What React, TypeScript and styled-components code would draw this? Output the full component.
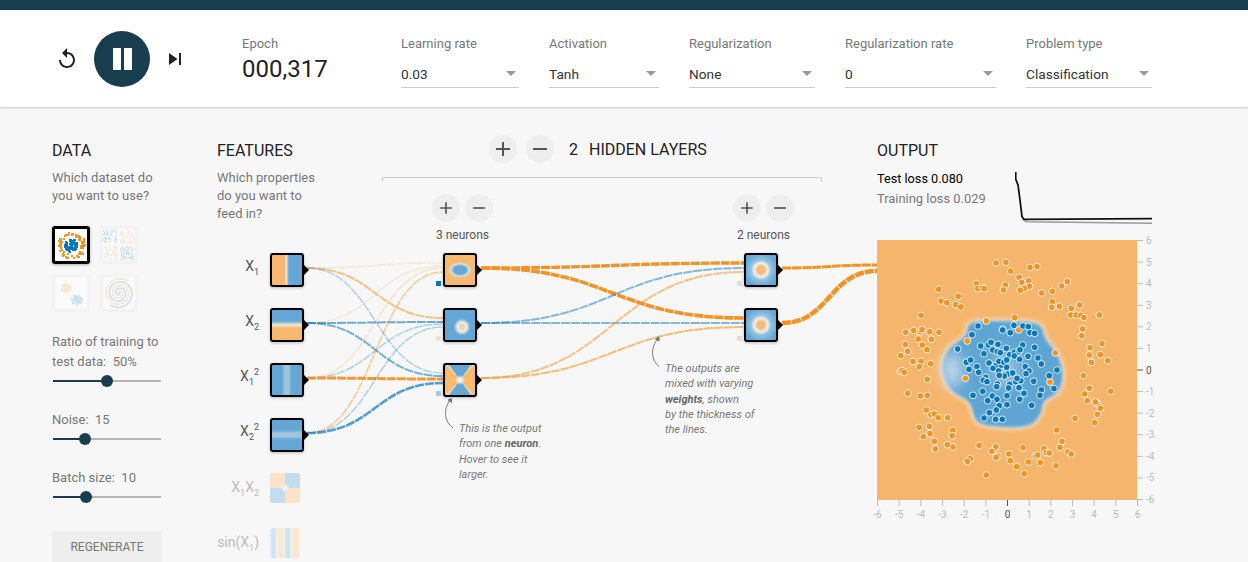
import React from 'react';
import styled, { createGlobalStyle } from 'styled-components';

const DARK = '#183d4e';
const ORANGE = '#f59322';
const BLUE = '#0877bd';

const GlobalStyle = createGlobalStyle`
  html, body {
    margin: 0;
    height: 562px;
    overflow: hidden;
    background: #f7f7f7;
    font-family: Roboto, "Liberation Sans", sans-serif;
  }
`;

const TopBar = styled.div`
  height: 10px;
  background: ${DARK};
  box-shadow: 0 1px 3px rgba(0, 0, 0, 0.35);
`;

const Header = styled.header`
  height: 97px;
  background: #fff;
  display: flex;
  align-items: flex-start;
  padding-left: 55px;
  box-shadow: 0 1px 2px rgba(0, 0, 0, 0.2);
`;

const Controls = styled.div`
  display: flex;
  align-items: center;
  height: 56px;
  margin-top: 21px;
`;

const IconButton = styled.div`
  width: 24px;
  height: 24px;
  color: #222;
`;

const PlayButton = styled.div`
  width: 56px;
  height: 56px;
  margin: 0 13px 0 15px;
  border-radius: 50%;
  background: ${DARK};
  display: flex;
  align-items: center;
  justify-content: center;
  gap: 3px;
`;

const PauseBar = styled.span`
  width: 8px;
  height: 22px;
  background: #fff;
`;

const Epoch = styled.div`
  width: 159px;
  margin: 26px 0 0 55px;
`;

const FieldLabel = styled.div`
  font-size: 13px;
  line-height: 15px;
  color: #777;
`;

const EpochValue = styled.div`
  font-size: 24px;
  line-height: 28px;
  margin-top: 4px;
  color: #222;
`;

const Fields = styled.div`
  display: flex;
  gap: 30px;
  margin-top: 26px;
`;

const Field = styled.div<{ $width: number }>`
  width: ${(p) => p.$width}px;
`;

const SelectBox = styled.div`
  position: relative;
  height: 27px;
  margin-top: 9px;
  font-size: 13.7px;
  line-height: 28px;
  color: #333;
  border-bottom: 1px solid #ccc;

  &::after {
    content: '';
    position: absolute;
    right: 3px;
    top: 11px;
    border-left: 5px solid transparent;
    border-right: 5px solid transparent;
    border-top: 5px solid #999;
  }
`;

const Main = styled.main`
  display: grid;
  grid-template-columns: 165px 660px 1fr;
  padding-left: 52px;
  height: 455px;
`;

const Heading = styled.h4`
  margin: 0;
  font-size: 16px;
  line-height: 20px;
  font-weight: 400;
  color: #222;
`;

const Hint = styled.p`
  margin: 8px 0 0;
  font-size: 13px;
  line-height: 18px;
  color: #777;
`;

const DataColumn = styled.section`
  padding-top: 34px;
`;

const DatasetGrid = styled.div`
  display: grid;
  grid-template-columns: 38px 38px;
  gap: 10px;
  margin-top: 21px;
`;

const Dataset = styled.div<{ $selected?: boolean }>`
  width: 38px;
  height: 38px;
  box-sizing: border-box;
  border-radius: 3px;
  background: ${(p) => (p.$selected ? '#fff' : '#fafafa')};
  border: ${(p) => (p.$selected ? '3px solid #000' : '3px solid #f2f2f2')};
  box-shadow: ${(p) => (p.$selected ? '0 1px 3px rgba(0,0,0,.3)' : 'none')};

  svg {
    display: block;
    opacity: ${(p) => (p.$selected ? 1 : 0.2)};
  }
`;

const SliderBlock = styled.div<{ $top: number }>`
  width: 110px;
  margin-top: ${(p) => p.$top}px;
  font-size: 13px;
  line-height: 20px;
  color: #777;
`;

const SliderTrack = styled.div`
  position: relative;
  height: 2px;
  margin: 8px 0 0 1px;
  width: 108px;
  background: #b5b5b5;
`;

const SliderFill = styled.div`
  height: 2px;
  background: ${DARK};
`;

const SliderThumb = styled.div`
  position: absolute;
  top: -5px;
  width: 12px;
  height: 12px;
  margin-left: -6px;
  border-radius: 50%;
  background: ${DARK};
`;

const Regenerate = styled.div`
  width: 110px;
  height: 36px;
  margin-top: 33px;
  border-radius: 2px;
  background: #eee;
  color: #777;
  font-size: 12px;
  line-height: 33px;
  text-align: center;
`;

const Diagram = styled.section`
  position: relative;
  display: flex;
  padding-top: 34px;
`;

const LinkLayer = styled.svg`
  position: absolute;
  left: 0;
  top: 0;
  pointer-events: none;
`;

const FeatureIntro = styled.div`
  width: 165px;
  position: relative;
`;

const FeatureHint = styled(Hint)`
  width: 110px;
`;

const HiddenColumn = styled.div`
  width: 440px;
  position: relative;
`;

const LayersBar = styled.div`
  display: flex;
  align-items: center;
  height: 28px;
  margin-top: -6px;
  padding-left: 107px;
  font-size: 16px;
  color: #222;
`;

const RoundButton = styled.div<{ $gap?: number }>`
  width: 28px;
  height: 28px;
  margin-right: ${(p) => p.$gap ?? 0}px;
  border-radius: 50%;
  background: #eee;
  color: #555;
  display: flex;
  align-items: center;
  justify-content: center;
`;

const LayerCount = styled.span`
  margin: 0 11px 0 15px;
`;

const Bracket = styled.div`
  height: 4px;
  margin-top: 14px;
  border: 1px solid #ccc;
  border-bottom: 0;
`;

const LayerControlRow = styled.div`
  display: flex;
  justify-content: space-between;
  padding: 0 28px 0 50px;
  margin-top: 12px;
`;

const LayerControl = styled.div`
  width: 61px;
`;

const ButtonPair = styled.div`
  display: flex;
  gap: 5px;
`;

const NeuronCount = styled.div`
  margin-top: 5px;
  font-size: 12px;
  line-height: 16px;
  color: #555;
  text-align: center;
  white-space: nowrap;
`;

const FeatureRow = styled.div<{ $top: number }>`
  position: absolute;
  left: 0;
  top: ${(p) => p.$top}px;
  height: 34px;
  display: flex;
  align-items: center;
`;

const FeatureLabel = styled.div<{ $off?: boolean }>`
  width: 42px;
  margin: 0 11px ${(p) => (p.$off ? 3 : 8)}px 0;
  text-align: right;
  white-space: nowrap;
  font-size: 14px;
  color: ${(p) => (p.$off ? '#bbb' : '#555')};

  sub,
  sup {
    font-size: 9px;
    line-height: 0;
  }
`;

const Node = styled.div<{ $fill: string }>`
  position: relative;
  width: 34px;
  height: 34px;
  box-sizing: border-box;
  border: 2px solid #000;
  border-radius: 3px;
  background: ${(p) => p.$fill};
  background-origin: border-box;
  box-shadow: 0 1px 3px rgba(0, 0, 0, 0.25);

  &::after {
    content: '';
    position: absolute;
    left: 32px;
    top: 10px;
    border-top: 5px solid transparent;
    border-bottom: 5px solid transparent;
    border-left: 5px solid #000;
  }
`;

const OffNode = styled.div<{ $fill: string }>`
  width: 30px;
  height: 30px;
  border-radius: 3px;
  background: ${(p) => p.$fill};
`;

const HiddenNode = styled.div<{ $left: number; $top: number }>`
  position: absolute;
  left: ${(p) => p.$left}px;
  top: ${(p) => p.$top}px;
`;

const WeightMark = styled.div<{ $color: string }>`
  position: absolute;
  left: -9px;
  top: 26px;
  width: 5px;
  height: 5px;
  background: ${(p) => p.$color};
`;

const Note = styled.div<{ $left: number; $top: number }>`
  position: absolute;
  left: ${(p) => p.$left}px;
  top: ${(p) => p.$top}px;
  width: 100px;
  font-size: 11px;
  font-style: italic;
  line-height: 15.3px;
  color: #777;

  b {
    color: #666;
  }
`;

const OutputColumn = styled.section`
  padding-top: 34px;
  position: relative;
`;

const LossRow = styled.div`
  display: flex;
  height: 52px;
  margin-top: 8px;

  svg {
    margin-top: 2px;
  }
`;

const LossText = styled.div`
  width: 138px;
`;

const LossLine = styled.div<{ $muted?: boolean }>`
  font-size: ${(p) => (p.$muted ? 12.9 : 12.7)}px;
  line-height: 20px;
  white-space: nowrap;
  color: ${(p) => (p.$muted ? '#777' : '#000')};
`;

const HeatmapBox = styled.div`
  margin-top: 19px;
`;

const PlotSvg = styled.svg`
  display: block;
  overflow: visible;
`;

const PlusIcon = ({ size }: { size: number }) => (
  <svg width={size} height={size} viewBox="0 0 24 24" fill="currentColor">
    <path d="M19 13h-6v6h-2v-6H5v-2h6V5h2v6h6v2z" />
  </svg>
);

const MinusIcon = ({ size }: { size: number }) => (
  <svg width={size} height={size} viewBox="0 0 24 24" fill="currentColor">
    <path d="M19 13H5v-2h14v2z" />
  </svg>
);

// small repeatable random numbers for the dataset thumbnails
const makeRandom = (seed: number) => {
  let s = seed;
  return () => {
    s = (s * 16807) % 2147483647;
    return s / 2147483647;
  };
};

type Pixel = { x: number; y: number; c: string };

const circlePixels = (): Pixel[] => {
  const r = makeRandom(11);
  const out: Pixel[] = [];
  for (let i = 0; i < 75; i++) {
    const a = r() * Math.PI * 2;
    const d = 9.5 + r() * 4.5;
    out.push({ x: 15.5 + Math.cos(a) * d, y: 15.5 + Math.sin(a) * d, c: ORANGE });
  }
  for (let i = 0; i < 65; i++) {
    const a = r() * Math.PI * 2;
    const d = Math.sqrt(r()) * 6.5;
    out.push({ x: 15.5 + Math.cos(a) * d, y: 15.5 + Math.sin(a) * d, c: BLUE });
  }
  return out;
};

const xorPixels = (): Pixel[] => {
  const r = makeRandom(23);
  const out: Pixel[] = [];
  for (let i = 0; i < 240; i++) {
    const x = r() * 30;
    const y = r() * 30;
    if (Math.abs(x - 15) < 1.5 || Math.abs(y - 15) < 1.5) continue;
    out.push({ x, y, c: x < 15 === y < 15 ? BLUE : ORANGE });
  }
  return out;
};

const gaussPixels = (): Pixel[] => {
  const r = makeRandom(37);
  const out: Pixel[] = [];
  for (let i = 0; i < 120; i++) {
    const a = r() * Math.PI * 2;
    const d = Math.sqrt(r()) * 5;
    const blue = i % 2 === 0;
    out.push({
      x: (blue ? 21 : 10) + Math.cos(a) * d,
      y: (blue ? 22 : 10) + Math.sin(a) * d,
      c: blue ? BLUE : ORANGE,
    });
  }
  return out;
};

const spiralPath = (phase: number) => {
  const pts: string[] = [];
  for (let t = 0; t < 15; t += 0.25) {
    const d = t * 1.02;
    pts.push(`${(16 + Math.cos(t + phase) * d).toFixed(1)},${(16 + Math.sin(t + phase) * d).toFixed(1)}`);
  }
  return pts.join(' ');
};

const Pixels = ({ data, size }: { data: Pixel[]; size: number }) => (
  <svg width="32" height="32" viewBox="0 0 32 32">
    {data.map((p, i) => (
      <rect key={i} x={Math.round(p.x)} y={Math.round(p.y)} width={size} height={size} fill={p.c} />
    ))}
  </svg>
);

const BL = '#64a7d4';
const OR = '#f6b96f';

const features = [
  { top: 146, label: <>X<sub>1</sub></>, fill: `linear-gradient(90deg, ${OR} 42%, #f0e6d8 48%, ${BL} 56%)` },
  { top: 201, label: <>X<sub>2</sub></>, fill: `linear-gradient(180deg, ${BL} 38%, #f3e6d4 50%, ${OR} 59%)` },
  {
    top: 256,
    label: <>X<sub>1</sub><sup>2</sup></>,
    fill: `linear-gradient(90deg, ${BL} 35%, #a0c6de 44%, #a0c6de 54%, ${BL} 64%)`,
  },
  {
    top: 311,
    label: <>X<sub>2</sub><sup>2</sup></>,
    fill: `linear-gradient(180deg, ${BL} 35%, #a0c6de 44%, #a0c6de 54%, ${BL} 64%)`,
  },
];

const offFeatures = [
  {
    top: 364,
    label: <>X<sub>1</sub>X<sub>2</sub></>,
    fill: 'radial-gradient(circle, #f3f3f0 0 1.5px, transparent 4.5px), conic-gradient(#c3ddef 0 25%, #fbe3c9 25% 50%, #c3ddef 50% 75%, #fbe3c9 75%)',
  },
  {
    top: 419,
    label: <>sin(X<sub>1</sub>)</>,
    fill: 'linear-gradient(90deg, #e8f0f5 0, #cfe3f1 8% 16%, #f3f1ec 23%, #fce6ce 30% 40%, #f3f1ec 47%, #cfe3f1 55% 65%, #f3f1ec 72%, #fce6ce 80% 93%, #f3f1ec)',
  },
];

const hiddenNodes = [
  {
    left: 226,
    top: 146,
    mark: BLUE,
    fill: `radial-gradient(ellipse 12px 8px at 50% 50%, ${BL} 0 50%, #d6dedd 78%, ${OR} 100%)`,
  },
  {
    left: 226,
    top: 201,
    mark: '#e8e4e0',
    fill: `radial-gradient(circle at 56% 56%, #f3d5ad 0 2.5px, #eef0ee 4.5px, ${BL} 8.5px)`,
  },
  {
    left: 226,
    top: 256,
    mark: '#a9cbe0',
    fill: `radial-gradient(circle, #efefea 0 2px, transparent 5px), conic-gradient(${BL} 0 9%, #e8d9c4 11%, ${OR} 13% 37%, #e8d9c4 39%, ${BL} 41% 59%, #e8d9c4 61%, ${OR} 63% 87%, #e8d9c4 89%, ${BL} 91%)`,
  },
  {
    left: 527,
    top: 146,
    mark: '#e8d9c8',
    fill: `radial-gradient(circle, #f5bb7d 0 3.5px, #eef0ee 7px, #93c2e0 10px, ${BL} 17px)`,
  },
  {
    left: 527,
    top: 201,
    mark: '#e8d9c8',
    fill: `radial-gradient(circle, #f5bb7d 0 3.5px, #eef0ee 7px, #93c2e0 10px, ${BL} 17px)`,
  },
];

type Link = { x0: number; y0: number; x1: number; y1: number; c: string; o: number; w: number };

const lk = (x0: number, y0: number, x1: number, y1: number, c: string, o: number, w: number): Link => ({
  x0, y0, x1, y1, c, o, w,
});

const links: Link[] = [
  lk(307, 268, 443, 263, ORANGE, 0.18, 1.5),
  lk(307, 268, 443, 318, ORANGE, 0.55, 2),
  lk(307, 268, 443, 373, BLUE, 0.3, 1.5),
  lk(307, 323, 443, 266, ORANGE, 0.18, 1.5),
  lk(307, 323, 443, 322, BLUE, 0.6, 2),
  lk(307, 323, 443, 376, BLUE, 0.55, 2),
  lk(307, 378, 443, 268, ORANGE, 0.2, 1.5),
  lk(307, 378, 443, 324, BLUE, 0.3, 1.5),
  lk(307, 378, 443, 379, ORANGE, 0.95, 3),
  lk(307, 433, 443, 272, ORANGE, 0.45, 1.6),
  lk(307, 433, 443, 327, BLUE, 0.3, 1.5),
  lk(307, 433, 443, 383, BLUE, 0.7, 2.6),
  lk(481, 268, 744, 263, ORANGE, 1, 3.4),
  lk(481, 268, 744, 318, ORANGE, 1, 3.6),
  lk(481, 323, 744, 268, BLUE, 0.5, 2),
  lk(481, 323, 744, 323, BLUE, 0.5, 2),
  lk(481, 378, 744, 272, ORANGE, 0.55, 2),
  lk(481, 378, 744, 327, ORANGE, 0.6, 2),
  lk(782, 268, 877, 265, ORANGE, 1, 3),
  lk(782, 323, 877, 271, ORANGE, 1, 4.5),
];

// dots read off the reference, in page pixels
const orangeTop = [
  [378, 399], [408, 397], [422, 423], [480, 412], [501, 410], [447, 442], [455, 457], [476, 453], [478, 469],
  [463, 475], [451, 481], [406, 465], [400, 480], [319, 461], [323, 476], [337, 474], [343, 476], [206, 478],
  [265, 499], [213, 513], [230, 518], [257, 524], [272, 531], [153, 556], [434, 563], [515, 489], [547, 484],
  [575, 468], [592, 455], [547, 515], [545, 532], [568, 529], [604, 535], [629, 525], [602, 555], [619, 555],
  [632, 556], [642, 563], [688, 555], [638, 596],
];
const blueTop = [[398, 598]];
const orangeBottom = [
  [107, 37], [131, 32], [151, 35], [156, 29], [179, 35], [207, 37], [145, 57], [184, 58], [106, 73], [157, 75],
  [113, 94], [171, 89], [92, 107], [129, 124], [153, 124], [182, 131], [148, 140], [91, 154], [96, 152],
  [103, 157], [172, 178], [286, 175], [113, 220], [151, 228], [172, 226], [169, 270], [183, 284], [193, 282],
  [205, 293], [233, 293], [147, 322], [178, 319], [248, 331], [180, 341], [246, 347], [160, 350], [193, 364],
  [232, 374], [249, 381], [196, 387], [327, 376], [377, 381], [365, 394], [384, 408], [378, 412], [301, 416],
  [292, 424], [349, 465], [416, 402], [421, 422], [440, 440], [463, 461], [459, 383], [475, 426], [496, 408],
  [503, 405], [511, 428], [522, 386], [529, 398], [538, 399], [558, 437], [570, 382], [576, 364], [560, 330],
  [594, 396], [604, 402], [615, 295], [674, 308], [682, 283], [682, 250], [676, 246], [691, 265], [722, 214],
  [652, 242], [644, 222], [658, 205], [640, 167], [664, 127], [713, 122], [658, 105], [691, 104], [660, 83],
  [696, 71], [635, 47], [638, 27], [556, 99], [292, 63], [446, 30], [540, 186], [349, 3],
];
const blueBottom = [
  [324, 18], [306, 44], [398, 30], [421, 38], [432, 16], [459, 18], [475, 20], [480, 38], [494, 40], [332, 78],
  [355, 75], [363, 67], [384, 73], [458, 75], [494, 82], [263, 87], [342, 101], [368, 90], [382, 95], [391, 98],
  [409, 85], [419, 104], [433, 97], [447, 95], [450, 89], [433, 108], [474, 109], [449, 118], [504, 114],
  [514, 132], [289, 127], [302, 120], [357, 129], [321, 140], [297, 148], [326, 157], [378, 136], [394, 136],
  [387, 124], [402, 127], [410, 120], [410, 142], [369, 145], [386, 153], [414, 162], [428, 159], [403, 168],
  [388, 166], [466, 140], [477, 153], [468, 161], [538, 167], [561, 150], [347, 172], [340, 181], [351, 185],
  [382, 192], [380, 200], [419, 193], [416, 204], [437, 185], [452, 182], [441, 175], [491, 184], [447, 203],
  [552, 206], [514, 210], [510, 226], [462, 220], [338, 214], [309, 226], [367, 228], [353, 242], [381, 238],
  [388, 257], [411, 227], [449, 238], [411, 254], [485, 256], [358, 278], [379, 270], [342, 294], [377, 298],
  [397, 298],
];

const fromTop = (p: number[]) => [p[0] / 3 - 7, p[1] / 3 - 110];
const fromBottom = (p: number[]) => [p[0] / 3 - 7, p[1] / 3 + 80];
const fromBlob = (p: number[]) => [p[0] / 3 + 53, p[1] / 3 + 70];

const blobPoints = [
  [112, 42], [150, 32], [260, 34], [335, 40], [345, 90], [385, 130], [402, 200], [385, 250], [338, 272],
  [335, 310], [305, 348], [230, 354], [145, 344], [130, 315], [120, 272], [60, 245], [32, 180], [50, 115],
  [112, 78],
].map(fromBlob);

const smoothPath = (pts: number[][]) => {
  const mid = (a: number[], b: number[]) => [(a[0] + b[0]) / 2, (a[1] + b[1]) / 2];
  const start = mid(pts[pts.length - 1], pts[0]);
  let d = `M${start[0].toFixed(1)} ${start[1].toFixed(1)}`;
  pts.forEach((p, i) => {
    const m = mid(p, pts[(i + 1) % pts.length]);
    d += ` Q${p[0].toFixed(1)} ${p[1].toFixed(1)} ${m[0].toFixed(1)} ${m[1].toFixed(1)}`;
  });
  return `${d} Z`;
};

const ticks = [-6, -5, -4, -3, -2, -1, 0, 1, 2, 3, 4, 5, 6];

const Heatmap = () => {
  const blob = smoothPath(blobPoints);
  const dots: { x: number; y: number; c: string }[] = [];
  orangeTop.forEach((p) => dots.push({ x: fromTop(p)[0], y: fromTop(p)[1], c: ORANGE }));
  blueTop.forEach((p) => dots.push({ x: fromTop(p)[0], y: fromTop(p)[1], c: BLUE }));
  orangeBottom.forEach((p) => dots.push({ x: fromBottom(p)[0], y: fromBottom(p)[1], c: ORANGE }));
  blueBottom.forEach((p) => dots.push({ x: fromBottom(p)[0], y: fromBottom(p)[1], c: BLUE }));
  return (
    <PlotSvg width="290" height="285" viewBox="0 0 290 285">
      <defs>
        <filter id="soft" x="-20%" y="-20%" width="140%" height="140%">
          <feGaussianBlur stdDeviation="1.4" />
        </filter>
        <filter id="halo" x="-20%" y="-20%" width="140%" height="140%">
          <feGaussianBlur stdDeviation="2.6" />
        </filter>
        <filter id="wide" x="-50%" y="-50%" width="200%" height="200%">
          <feGaussianBlur stdDeviation="7" />
        </filter>
        <clipPath id="plot">
          <rect width="260" height="260" />
        </clipPath>
      </defs>
      <g clipPath="url(#plot)">
        <rect width="260" height="260" fill="#f6b56c" />
        <path d={blob} fill="#f5efe6" stroke="#f5efe6" strokeWidth="3" filter="url(#halo)" />
        <path d={blob} fill="#5fa5d3" filter="url(#soft)" />
        <ellipse cx="75" cy="130" rx="11" ry="18" fill="#d5e3ec" opacity="0.8" filter="url(#wide)" />
        <ellipse cx="128" cy="130" rx="12" ry="17" fill="#b3d3e8" opacity="0.75" filter="url(#wide)" />
      </g>
      {dots.map((d, i) => (
        <circle key={i} cx={d.x} cy={d.y} r="3.4" fill={d.c} stroke="#fff" strokeOpacity="0.85" strokeWidth="1" />
      ))}
      {ticks.map((t) => {
        const x = 0.5 + ((t + 6) * 260) / 12;
        const y = 0.5 + ((6 - t) * 259) / 12;
        const color = t === 0 ? '#555' : '#bbb';
        return (
          <g key={t} fontFamily="Roboto, sans-serif" fontSize="10" fill={color}>
            <line x1={x} x2={x} y1="260" y2="266" stroke={color} />
            <text x={x} y="278" textAnchor="middle">{t}</text>
            <line x1="260" x2="266" y1={y} y2={y} stroke={color} />
            <text x="269" y={y + 3.5}>{t}</text>
          </g>
        );
      })}
    </PlotSvg>
  );
};

const Slider = ({ pos }: { pos: number }) => (
  <SliderTrack>
    <SliderFill style={{ width: pos }} />
    <SliderThumb style={{ left: pos }} />
  </SliderTrack>
);

const selects = [
  { label: 'Learning rate', value: '0.03', width: 118 },
  { label: 'Activation', value: 'Tanh', width: 110 },
  { label: 'Regularization', value: 'None', width: 126 },
  { label: 'Regularization rate', value: '0', width: 151 },
  { label: 'Problem type', value: 'Classification', width: 126 },
];

const App = () => (
  <>
    <GlobalStyle />
    <TopBar />
    <Header>
      <Controls>
        <IconButton>
          <svg width="24" height="24" viewBox="0 0 24 24" fill="currentColor">
            <path d="M12 5V1L7 6l5 5V7c3.31 0 6 2.69 6 6s-2.69 6-6 6-6-2.69-6-6H4c0 4.42 3.58 8 8 8s8-3.58 8-8-3.58-8-8-8z" />
          </svg>
        </IconButton>
        <PlayButton>
          <PauseBar />
          <PauseBar />
        </PlayButton>
        <IconButton>
          <svg width="24" height="24" viewBox="0 0 24 24" fill="currentColor">
            <path d="M6 18l8.5-6L6 6v12zM16 6v12h2V6h-2z" />
          </svg>
        </IconButton>
      </Controls>
      <Epoch>
        <FieldLabel>Epoch</FieldLabel>
        <EpochValue>000,317</EpochValue>
      </Epoch>
      <Fields>
        {selects.map((s) => (
          <Field key={s.label} $width={s.width}>
            <FieldLabel>{s.label}</FieldLabel>
            <SelectBox>{s.value}</SelectBox>
          </Field>
        ))}
      </Fields>
    </Header>
    <Main>
      <DataColumn>
        <Heading>DATA</Heading>
        <Hint>Which dataset do<br />you want to use?</Hint>
        <DatasetGrid>
          <Dataset $selected><Pixels data={circlePixels()} size={2} /></Dataset>
          <Dataset><Pixels data={xorPixels()} size={1.4} /></Dataset>
          <Dataset><Pixels data={gaussPixels()} size={1.6} /></Dataset>
          <Dataset>
            <svg width="32" height="32" viewBox="0 0 32 32" fill="none" strokeWidth="1.6">
              <polyline points={spiralPath(0)} stroke={BLUE} />
              <polyline points={spiralPath(Math.PI)} stroke={ORANGE} />
            </svg>
          </Dataset>
        </DatasetGrid>
        <SliderBlock $top={20}>
          Ratio of training to<br />test data:&nbsp; 50%
          <Slider pos={54} />
        </SliderBlock>
        <SliderBlock $top={28}>
          Noise:&nbsp; 15
          <Slider pos={32} />
        </SliderBlock>
        <SliderBlock $top={28}>
          Batch size:&nbsp; 10
          <Slider pos={33} />
        </SliderBlock>
        <Regenerate>REGENERATE</Regenerate>
      </DataColumn>

      <Diagram>
        <LinkLayer width="660" height="455" viewBox="217 107 660 455" fill="none">
          {links.map((l, i) => {
            const mx = (l.x0 + l.x1) / 2;
            return (
              <path
                key={i}
                d={`M${l.x0} ${l.y0} C${mx} ${l.y0} ${mx} ${l.y1} ${l.x1} ${l.y1}`}
                stroke={l.c}
                strokeOpacity={l.o}
                strokeWidth={l.w}
                strokeDasharray="9 1"
              />
            );
          })}
          <g stroke="#777" strokeWidth="1">
            <path d="M453 428 C445 422 442 410 451 399" />
            <path d="M448 400 L451.500 398.500 L451.500 402.500 Z" fill="#777" />
            <path d="M659 366.500 C651 360 650 348 658.500 337.500" />
            <path d="M655.500 339 L659 337 L659 341 Z" fill="#777" />
          </g>
        </LinkLayer>

        <FeatureIntro>
          <Heading>FEATURES</Heading>
          <FeatureHint>Which properties do you want to feed in?</FeatureHint>
        </FeatureIntro>

        <HiddenColumn>
          <LayersBar>
            <RoundButton $gap={9}><PlusIcon size={24} /></RoundButton>
            <RoundButton><MinusIcon size={24} /></RoundButton>
            <LayerCount>2</LayerCount>
            HIDDEN LAYERS
          </LayersBar>
          <Bracket />
          <LayerControlRow>
            <LayerControl>
              <ButtonPair>
                <RoundButton><PlusIcon size={20} /></RoundButton>
                <RoundButton><MinusIcon size={20} /></RoundButton>
              </ButtonPair>
              <NeuronCount>3 neurons</NeuronCount>
            </LayerControl>
            <LayerControl>
              <ButtonPair>
                <RoundButton><PlusIcon size={20} /></RoundButton>
                <RoundButton><MinusIcon size={20} /></RoundButton>
              </ButtonPair>
              <NeuronCount>2 neurons</NeuronCount>
            </LayerControl>
          </LayerControlRow>
        </HiddenColumn>

        {features.map((f) => (
          <FeatureRow key={f.top} $top={f.top}>
            <FeatureLabel>{f.label}</FeatureLabel>
            <Node $fill={f.fill} />
          </FeatureRow>
        ))}
        {offFeatures.map((f) => (
          <FeatureRow key={f.top} $top={f.top}>
            <FeatureLabel $off>{f.label}</FeatureLabel>
            <OffNode $fill={f.fill} />
          </FeatureRow>
        ))}
        {hiddenNodes.map((n) => (
          <HiddenNode key={`${n.left}-${n.top}`} $left={n.left} $top={n.top}>
            <Node $fill={n.fill}>
              <WeightMark $color={n.mark} />
            </Node>
          </HiddenNode>
        ))}

        <Note $left={242} $top={314}>
          This is the output<br />from one <b>neuron</b>.<br />Hover to see it<br />larger.
        </Note>
        <Note $left={448} $top={254}>
          The outputs are<br />mixed with varying<br /><b>weights</b>, shown<br />by the thickness of<br />the lines.
        </Note>
      </Diagram>

      <OutputColumn>
        <Heading>OUTPUT</Heading>
        <LossRow>
          <LossText>
            <LossLine>Test loss 0.080</LossLine>
            <LossLine $muted>Training loss 0.029</LossLine>
          </LossText>
          <svg width="140" height="56" viewBox="1015 171 140 56" fill="none">
            <path d="M1022.700 219.300 L1026.700 221.700 L1152 223.300" stroke="#999" strokeWidth="1.500" />
            <path d="M1015.700 172 L1015.700 179 L1018 185 L1020 200 L1022 216.700 L1024 219.300 L1152 218.700" stroke="#111" strokeWidth="1.800" />
          </svg>
        </LossRow>
        <HeatmapBox>
          <Heatmap />
        </HeatmapBox>
      </OutputColumn>
    </Main>
  </>
);

export default App;
